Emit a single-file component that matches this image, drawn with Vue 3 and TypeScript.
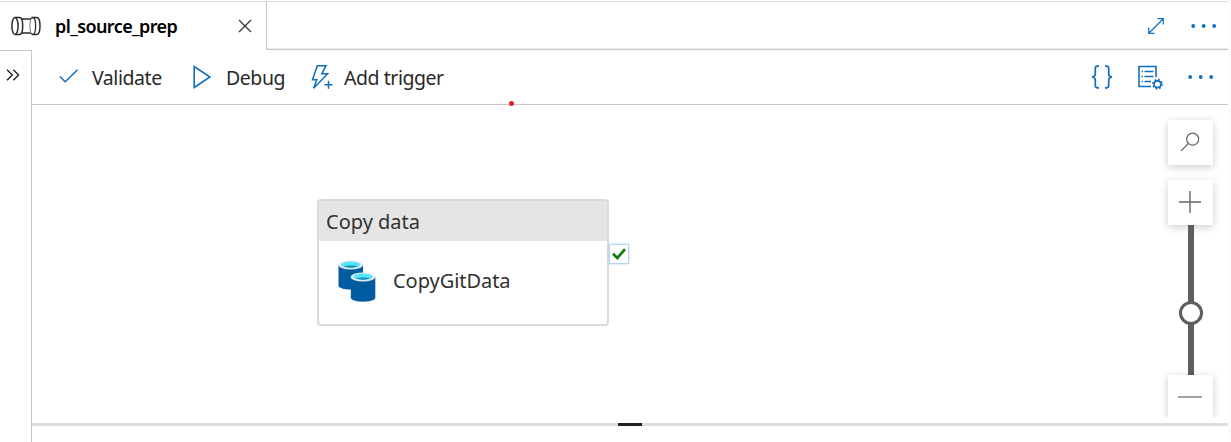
<script setup lang="ts">
import { ref } from 'vue'

interface Activity {
  type: string
  name: string
}

const pipelineName = ref<string>('pl_source_prep')
const activity: Activity = { type: 'Copy data', name: 'CopyGitData' }
</script>

<template>
  <div class="app">
    <header class="tabs">
      <div class="tab">
        <svg class="pipe" width="30" height="20" viewBox="0 0 30 20" fill="none" stroke="#2b2b2b" stroke-width="1.500">
          <ellipse cx="4" cy="10" rx="3.100" ry="8.500" />
          <path d="M4 1.500H8.500C10.600 1.500 11.700 5 11.700 10S10.600 18.500 8.500 18.500H4M10.800 3H19.800M10.800 17H19.800" />
          <path d="M21.500 1.500H25.500C27.800 1.500 29 5 29 10S27.800 18.500 25.500 18.500H21.500" />
          <path d="M19.800 3C20.500 1.900 21 1.500 21.700 1.500C23.600 1.500 24.600 5 24.600 10S23.600 18.500 21.700 18.500C21 18.500 20.500 18.100 19.800 17" stroke-width="1.300" />
          <path d="M19.800 3C18.600 6.500 18.600 13.500 19.800 17" stroke-width="1" stroke="#777" />
        </svg>
        <span class="tab-name">{{ pipelineName }}</span>
        <svg class="close" width="14" height="14" viewBox="0 0 14 14" stroke="#333" stroke-width="1.200"><path d="M1 1l12 12M13 1L1 13" /></svg>
      </div>
      <div class="tab-actions">
        <svg class="expand" width="18" height="18" viewBox="0 0 18 18" fill="none" stroke="#106ebe" stroke-width="1.200"><path d="M2 16L16 2M10.500 1.700H16.300V7.500M1.700 10.500V16.300H7.500" /></svg>
        <svg class="more" width="26" height="4" viewBox="0 0 26 4" fill="#106ebe"><circle cx="2.200" cy="2" r="1.900" /><circle cx="12.700" cy="2" r="1.900" /><circle cx="23.200" cy="2" r="1.900" /></svg>
      </div>
    </header>

    <div class="body">
      <aside class="rail">
        <svg width="14" height="12" viewBox="0 0 14 12" fill="none" stroke="#222" stroke-width="1.400"><path d="M1 .7L6.300 6L1 11.300M7.300 .7L12.600 6L7.300 11.300" /></svg>
      </aside>
      <main class="main">
        <nav class="toolbar">
          <svg class="check" width="20" height="14" viewBox="0 0 20 14" fill="none" stroke="#106ebe" stroke-width="1.500"><path d="M.8 7.500L6.300 12.800L18.500 .800" /></svg>
          <span class="validate">Validate</span>
          <svg class="play" width="18" height="24" viewBox="0 0 18 24" fill="none" stroke="#106ebe" stroke-width="1.600"><path d="M1.200 1.500V22.500L17 12Z" /></svg>
          <span class="debug">Debug</span>
          <svg class="bolt" width="23" height="26" viewBox="0 0 23 26" fill="none" stroke="#106ebe" stroke-width="1.500"><path d="M6.300 1.700H15L10.800 9.800H16.600L2.600 24.300L5.800 15.700H1.500Z" /><path d="M17.500 17V24.500M13.800 20.700H21.300" stroke="#fff" stroke-width="4" /><path d="M17.500 16.700V24.700M13.500 20.700H21.500" /></svg>
          <span class="trigger">Add trigger</span>
          <div class="tools">
            <svg class="braces" width="22" height="24" viewBox="0 0 22 24" fill="none" stroke="#106ebe" stroke-width="1.700"><path d="M8 1.200H6.500Q4.300 1.200 4.300 3.500V9Q4.300 11.700 1 12Q4.300 12.300 4.300 15V20.500Q4.300 22.800 6.500 22.800H8M14 1.200H15.500Q17.700 1.200 17.700 3.500V9Q17.700 11.700 21 12Q17.700 12.300 17.700 15V20.500Q17.700 22.800 15.500 22.800H14" /></svg>
            <svg class="props" width="25" height="25" viewBox="0 0 25 25" fill="none" stroke="#106ebe" stroke-width="1.600">
              <path d="M18 12V1.500H1V21.500H13" />
              <path d="M3.500 6.500H5M6.500 6.500H15.500M3.500 11.500H5M6.500 11.500H15.500M3.500 16.500H5M6.500 16.500H13" stroke-width="1.300" />
              <circle cx="19.500" cy="19.200" r="3.300" stroke-width="1.600" />
              <circle cx="19.500" cy="19.200" r="4.500" stroke-width="1.800" stroke-dasharray="1.734 1.800" />
            </svg>
            <svg class="more" width="26" height="4" viewBox="0 0 26 4" fill="#106ebe"><circle cx="2.200" cy="2" r="1.900" /><circle cx="12.700" cy="2" r="1.900" /><circle cx="23.200" cy="2" r="1.900" /></svg>
          </div>
          <i class="marker"></i>
        </nav>

        <section class="canvas">
          <article class="node">
            <div class="node-type">{{ activity.type }}</div>
            <div class="node-body">
              <svg width="38" height="42" viewBox="0 0 38 42">
                <path d="M.5 5V25.500C.5 28 6 29.500 12.700 29.500S25 28 25 25.500V5Z" fill="#005ba1" />
                <ellipse cx="12.700" cy="5" rx="12.200" ry="4.500" fill="#e8e8e8" />
                <ellipse cx="12.700" cy="4.700" rx="9.500" ry="3.100" fill="#50e6ff" />
                <path d="M5.500 6.600Q12.700 4.600 20 6.600Q12.700 8.800 5.500 6.600" fill="#198ab3" />
                <path d="M12.800 17V37.500C12.800 40 18 41.700 25 41.700S37.300 40 37.300 37.500V17Z" fill="#005ba1" />
                <ellipse cx="25" cy="17" rx="12.250" ry="4.500" fill="#e8e8e8" />
                <ellipse cx="25" cy="16.700" rx="9.500" ry="3.100" fill="#50e6ff" />
                <path d="M17.800 18.600Q25 16.600 32.300 18.600Q25 20.800 17.800 18.600" fill="#198ab3" />
              </svg>
              <span class="node-name">{{ activity.name }}</span>
            </div>
            <div class="success">
              <svg width="14" height="12" viewBox="0 0 14 12" fill="none" stroke="#107c10" stroke-width="2.700"><path d="M1 5.800L5.300 10L13 1.200" /></svg>
            </div>
          </article>

          <div class="zoom">
            <button class="box search" aria-label="Search">
              <svg width="20" height="20" viewBox="0 0 20 20" fill="none" stroke="#666" stroke-width="1.200"><circle cx="12.700" cy="7.200" r="6" /><path d="M8.400 11.500L1 18.900" /></svg>
            </button>
            <button class="box plus" aria-label="Zoom in">
              <svg width="22" height="22" viewBox="0 0 22 22" stroke="#666" stroke-width="1.400"><path d="M11 0V22M0 11H22" /></svg>
            </button>
            <div class="track"><div class="thumb"></div></div>
            <button class="box minus" aria-label="Zoom out">
              <svg width="24" height="2" viewBox="0 0 24 2" stroke="#666" stroke-width="1.200"><path d="M0 1H24" /></svg>
            </button>
          </div>
        </section>
        <div class="splitter"><div class="handle"></div></div>
      </main>
    </div>
  </div>
</template>

<style>
body {
  background: #fbfbfb;
}
</style>

<style scoped>
.app {
  width: 1228px;
  height: 442px;
  overflow: hidden;
  background: #fff;
  color: #292827;
  font: 20px/26px "Noto Sans", sans-serif;
  display: flex;
  flex-direction: column;
}
svg {
  display: block;
  flex: none;
}
span {
  white-space: nowrap;
}
.tabs {
  height: 50px;
  flex: none;
  display: flex;
  padding-top: 1px;
  box-sizing: border-box;
  background: linear-gradient(#dcdcdc, #dcdcdc) 0 1px / 100% 1px no-repeat;
}
.tab {
  width: 267px;
  box-sizing: border-box;
  border-right: 1px solid #c8c8c8;
  display: flex;
  align-items: center;
  padding: 1px 0 0 11px;
}
.tab-name {
  width: 171px;
  margin-left: 14px;
  font-size: 18px;
  font-weight: 600;
  letter-spacing: -0.6px;
  color: #000;
}
.close {
  margin-left: 12px;
}
.tab-actions {
  flex: 1;
  border-bottom: 1px solid #c8c8c8;
  box-shadow: inset 0 -1px 0 #ececec;
  display: flex;
  justify-content: flex-end;
  align-items: center;
  padding: 2px 11px 0 0;
  gap: 26px;
}
.body {
  flex: 1;
  display: flex;
}
.rail {
  width: 32px;
  box-sizing: border-box;
  border: 1px solid #c8c8c8;
  border-left: 0;
  border-bottom: 0;
  padding: 18px 0 0 6px;
}
.main {
  flex: 1;
  display: flex;
  flex-direction: column;
}
.toolbar {
  position: relative;
  height: 55px;
  box-sizing: border-box;
  border-bottom: 1px solid #c8c8c8;
  display: flex;
  align-items: center;
  padding: 0 14px 0 27px;
}
.toolbar span {
  font-size: 19.5px;
  letter-spacing: -0.45px;
  padding-top: 1px;
}
.check {
  margin: -2px 13px 0 0;
}
.validate {
  width: 101px;
}
.play {
  margin-right: 15px;
}
.debug {
  width: 85px;
}
.bolt {
  margin-right: 10px;
}
.tools {
  margin-left: auto;
  display: flex;
  align-items: center;
}
.props {
  margin: 0 25px 0 25px;
}
.marker {
  position: absolute;
  left: 477px;
  top: 51px;
  width: 5px;
  height: 5px;
  border-radius: 50%;
  background: #ed1c24;
}
.canvas {
  height: 312px;
  overflow: hidden;
  display: flex;
  justify-content: space-between;
  align-items: flex-start;
  padding: 0 15px 0 285px;
}
.node {
  position: relative;
  width: 292px;
  height: 127px;
  margin-top: 94px;
  box-sizing: border-box;
  border: 2px solid #dadada;
  border-radius: 4px;
  color: #323130;
}
.node-type {
  height: 40px;
  line-height: 41px;
  padding-left: 7px;
  background: #e5e5e5;
  letter-spacing: 0;
}
.node-body {
  display: flex;
  align-items: center;
  padding: 19px 0 0 19px;
}
.node-name {
  margin: 0 0 0 17px;
  letter-spacing: -0.05px;
}
.success {
  position: absolute;
  left: 290px;
  top: 43px;
  width: 20px;
  height: 20px;
  box-sizing: border-box;
  border: 1px solid #b3d5f4;
  box-shadow: 0 0 2px #a9cff2;
  background: #fff;
  display: flex;
  align-items: center;
  justify-content: center;
}
.zoom {
  width: 45px;
  padding-top: 15px;
  display: flex;
  flex-direction: column;
  align-items: center;
}
.box {
  width: 45px;
  height: 45px;
  flex: none;
  border: 0;
  padding: 0 1px 2px 0;
  box-sizing: border-box;
  background: #fff;
  box-shadow: 0 2px 8px rgba(0, 0, 0, 0.2);
  display: flex;
  align-items: center;
  justify-content: center;
}
.search {
  margin-bottom: 15px;
}
.track {
  width: 6px;
  height: 150px;
  background: #605e5c;
  display: flex;
  justify-content: center;
}
.thumb {
  width: 24px;
  height: 24px;
  flex: none;
  margin-top: 76px;
  box-sizing: border-box;
  border: 3px solid #605e5c;
  border-radius: 50%;
  background: #fff;
}
.splitter {
  height: 3px;
  margin-top: 6px;
  background: #dedede;
}
.handle {
  width: 24px;
  height: 3px;
  margin-left: 586px;
  background: #222;
}
</style>
